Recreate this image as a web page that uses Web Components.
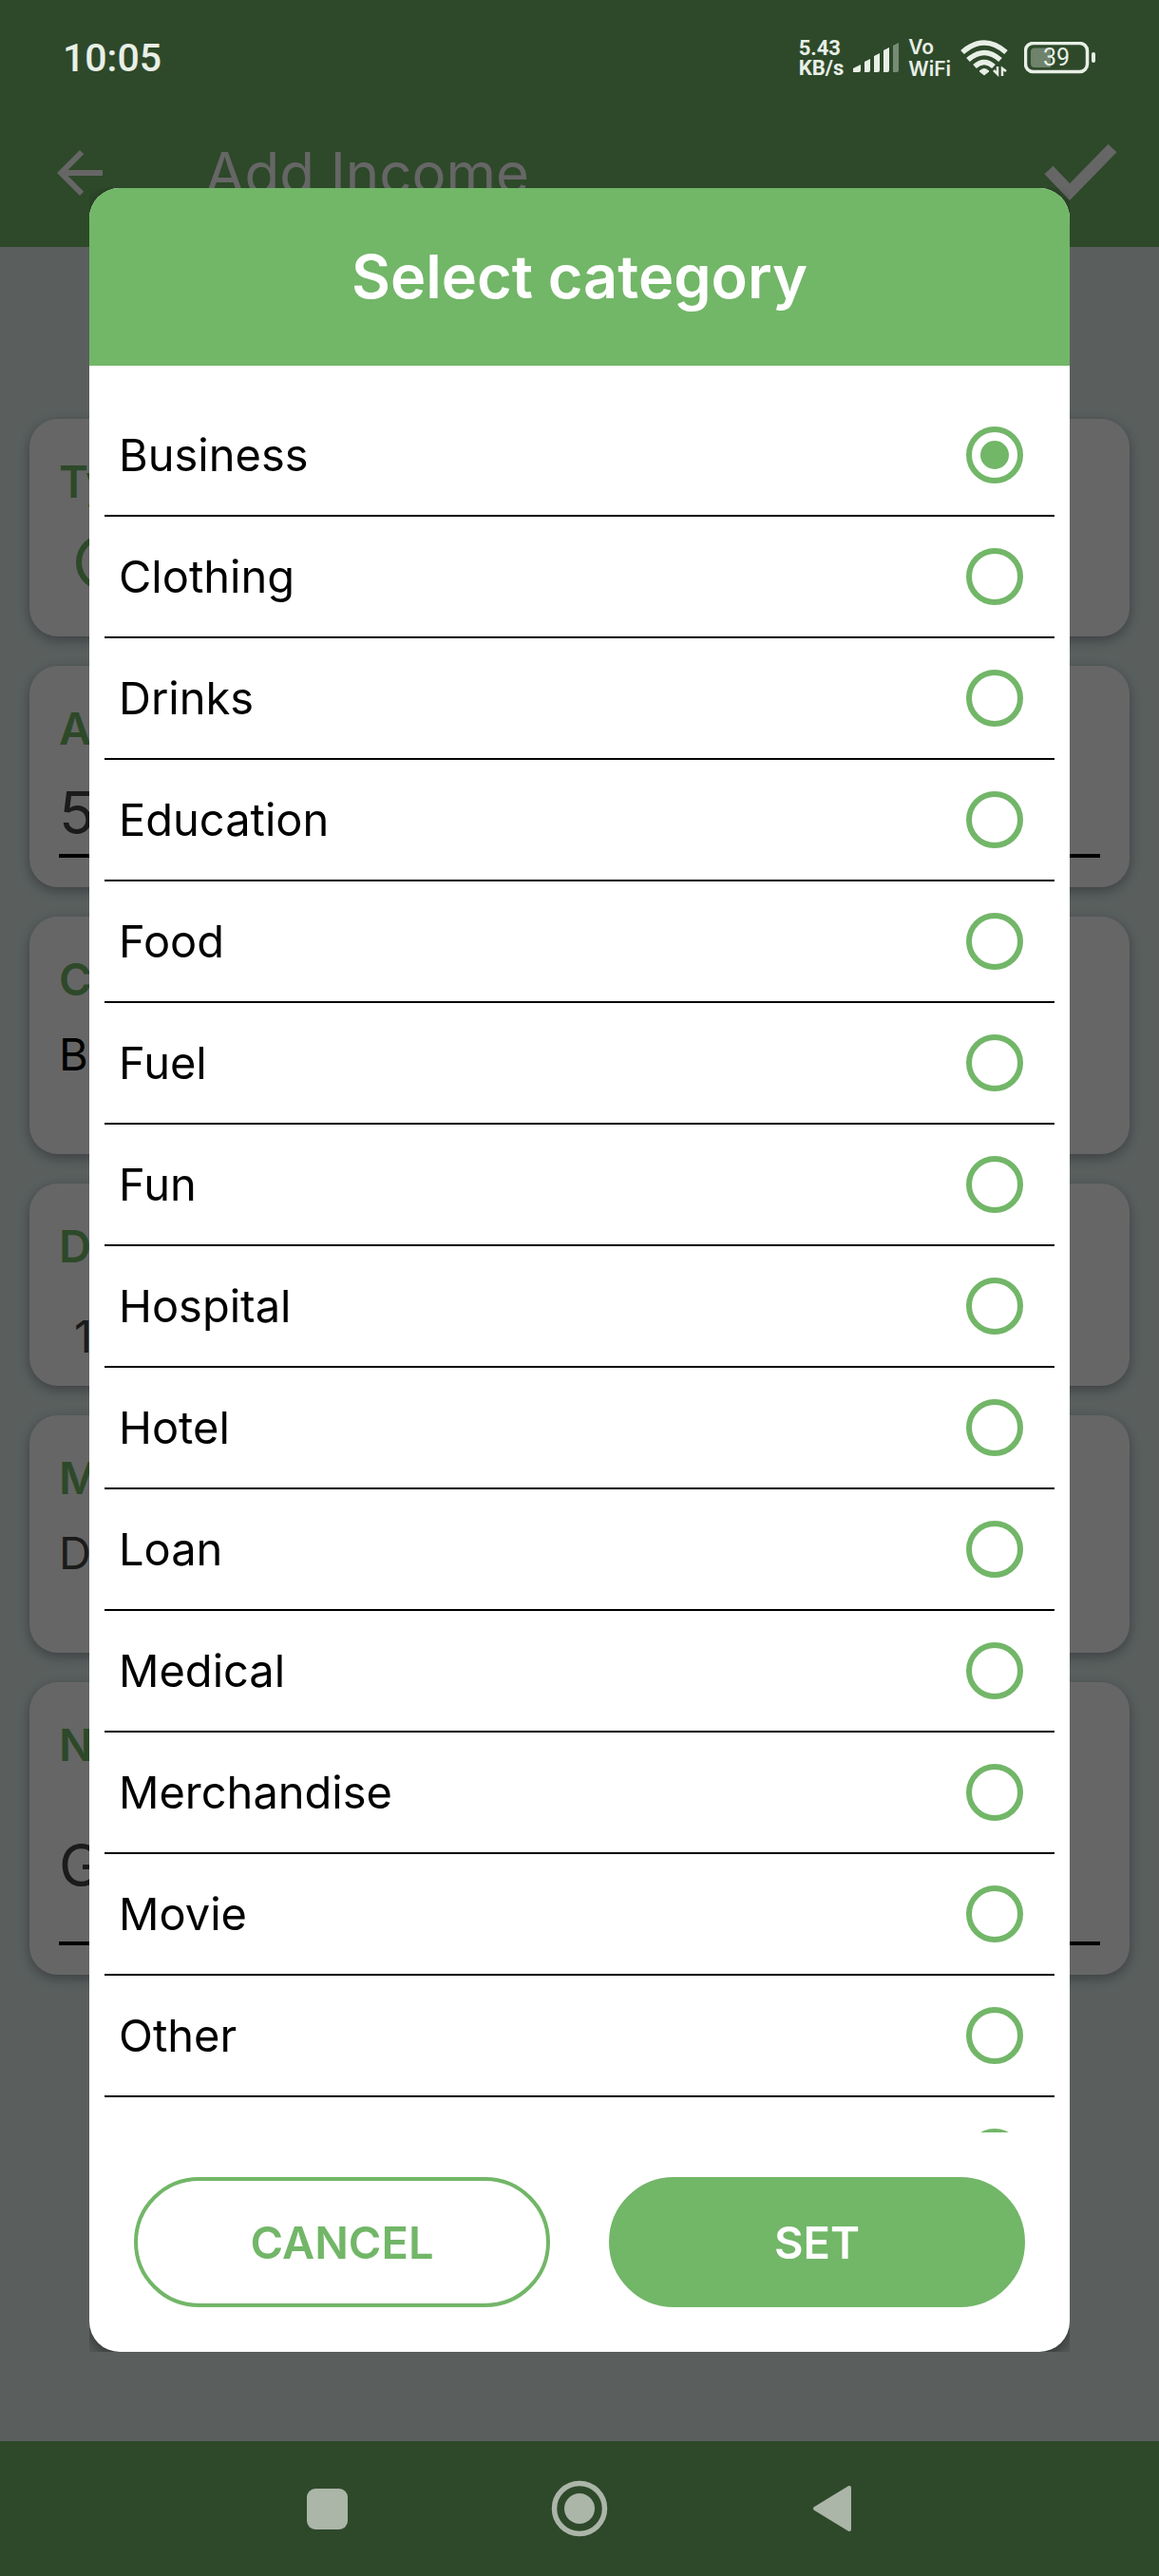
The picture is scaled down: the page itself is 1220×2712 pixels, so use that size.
<!DOCTYPE html>
<html lang="en">
<head>
<meta charset="utf-8">
<meta name="viewport" content="width=device-width, initial-scale=1">
<title>Add Income</title>
<style>
  html, body { margin: 0; height: 100%; }
  body {
    --green: #72b668;
    --label: 47px;
    --title: 63px;
    font-family: Inter, "Liberation Sans", sans-serif;
    font-size: var(--label);
    line-height: 56px;
    color: #000;
    background: #e1eeec;
  }
</style>
</head>
<body>
<app-screen>
  <status-bar slot="status" time="10:05" rate="5.43" battery="39"></status-bar>
  <app-bar slot="bar">Add Income</app-bar>

  <form-card label="Type"><radio-dot name="type" label="Income"></radio-dot></form-card>
  <form-card label="Amount" size="amount"><line-input value="5" label="Amount"></line-input></form-card>
  <form-card label="Category" size="tall"><field-value>Business</field-value></form-card>
  <form-card label="Date" size="date"><field-value class="soft inset">1</field-value></form-card>
  <form-card label="Mode" size="tall"><field-value class="soft">D</field-value></form-card>
  <form-card label="Note" size="note"><line-input value="G" label="Note"></line-input></form-card>

  <nav-bar slot="nav"></nav-bar>
</app-screen>
<category-dialog heading="Select category" selected="Business"
  options="Business,Clothing,Drinks,Education,Food,Fuel,Fun,Hospital,Hotel,Loan,Medical,Merchandise,Movie,Other,Salary"></category-dialog>

<script>
const define = (name, render) => customElements.define(name, class extends HTMLElement {
  connectedCallback() {
    if (this.shadowRoot) return;
    this.attachShadow({ mode: 'open' }).innerHTML = render(this);
  }
});

const radioStyle = `
  input {
    appearance: none; flex: none; box-sizing: border-box; width: 60px; height: 60px; margin: 0;
    border: 6px solid var(--green); border-radius: 50%; display: grid; place-items: center;
  }
  input:checked::before { content: ""; width: 30px; height: 30px; border-radius: 50%; background: var(--green); }
`;

define('app-screen', () => `
  <style>
    :host { display: flex; flex-direction: column; min-height: 100vh; }
    main { flex: 1; display: flex; flex-direction: column; gap: 31px; padding: 181px 31px 31px; }
  </style>
  <slot name="status"></slot>
  <slot name="bar"></slot>
  <main><slot></slot></main>
  <slot name="nav"></slot>`);

define('status-bar', el => `
  <style>
    :host {
      display: flex; align-items: center; justify-content: space-between; box-sizing: border-box;
      height: 104px; padding: 18px 66px 0; position: relative; z-index: 2;
      background: #2e492a; color: #e8efe6; font-family: Roboto, sans-serif;
    }
    time { font-size: 41px; font-weight: 500; }
    .icons { display: flex; align-items: center; gap: 10px; }
    .pair { display: flex; flex-direction: column; font-size: 22px; line-height: 21px; font-weight: 700; }
    .vo { font-family: Inter, sans-serif; font-weight: 600; font-size: 21px; line-height: 23px; }
    svg { display: block; }
    .battery { display: grid; align-items: center; margin-left: 7px; }
    .battery > * { grid-area: 1 / 1; }
    .battery span { width: 68px; text-align: center; font-size: 25px; line-height: 34px; }
  </style>
  <time>${el.getAttribute('time')}</time>
  <div class="icons">
    <div class="pair"><span>${el.getAttribute('rate')}</span><span>KB/s</span></div>
    <svg width="48" height="32" fill="currentColor" aria-hidden="true">
      <path d="M0 31V27L8 23V29Q8 31 6 31Z"/>
      <path d="M12 31V20L18 17V29Q18 31 16 31Z"/>
      <path d="M22 31V14L28 11V29Q28 31 26 31Z"/>
      <path d="M32 31V8L38 5V29Q38 31 36 31Z"/>
      <path d="M42 31V3L48 0V29Q48 31 46 31Z" opacity=".4"/>
    </svg>
    <div class="pair vo"><span>Vo</span><span>WiFi</span></div>
    <svg width="50" height="39" fill="none" stroke="currentColor" stroke-width="5.5" aria-hidden="true">
      <path d="M2 13Q25 -7 48 13"/><path d="M8 21Q25 6 42 21"/><path d="M15 28Q25 19 35 28"/>
      <path d="M20 33Q25 28 30 33L25 37Z" fill="currentColor" stroke-width="1"/>
      <path d="M39 28V36L35 32M44 38V30L48 33" stroke-width="2.5"/>
    </svg>
    <div class="battery">
      <svg width="76" height="34" aria-hidden="true">
        <rect x="1.5" y="1.5" width="65" height="30" rx="8" fill="none" stroke="currentColor" stroke-width="3.5"/>
        <path d="M28 6.500V27H11Q7 27 7 23V10.500Q7 6.500 11 6.500Z" fill="currentColor" opacity=".35"/>
        <rect x="71" y="11" width="4" height="11" rx="2" fill="currentColor"/>
      </svg>
      <span>${el.getAttribute('battery')}</span>
    </div>
  </div>`);

define('app-bar', () => `
  <style>
    :host { display: flex; align-items: center; height: 156px; padding: 0 36px 0 48px; background: var(--green); color: #fff; }
    h1 { flex: 1; margin: 0 0 0 96px; font: 400 60px/72px Inter, sans-serif; }
    button { display: block; padding: 0; border: 0; background: none; color: inherit; }
    svg { display: block; }
  </style>
  <button aria-label="Back"><svg width="72" height="72" viewBox="0 0 24 24" fill="currentColor"><path d="M20 11H7.830l5.590-5.590L12 4l-8 8 8 8 1.410-1.410L7.830 13H20v-2z"/></svg></button>
  <h1><slot></slot></h1>
  <button aria-label="Save"><svg width="92" height="72" viewBox="0 0 92 72" fill="none" stroke="currentColor" stroke-width="12.500"><path d="M12 33L34 56L79 10"/></svg></button>`);

define('form-card', el => `
  <style>
    :host {
      display: flex; flex-direction: column; box-sizing: border-box; min-height: 229px;
      padding: 38px 31px 31px; border-radius: 30px; background: #fff;
      box-shadow: 0 4px 14px rgba(50, 55, 75, .45);
    }
    :host([size=amount]) { min-height: 233px; }
    :host([size=tall]) { min-height: 250px; gap: 23px; }
    :host([size=date]) { min-height: 213px; gap: 39px; padding-bottom: 24px; }
    :host([size=note]) { min-height: 308px; }
    h2 { margin: 0; font: inherit; font-weight: 600; color: var(--green); }
  </style>
  <h2>${el.getAttribute('label')}</h2>
  <slot></slot>`);

define('radio-dot', el => `
  <style>:host { display: flex; padding: 27px 18px 0; } ${radioStyle}</style>
  <input type="radio" name="${el.getAttribute('name')}" aria-label="${el.getAttribute('label')}">`);

define('line-input', el => `
  <style>
    :host { display: flex; flex: 1; min-height: 108px; }
    input {
      flex: 1; min-width: 0; box-sizing: border-box; margin: 0; padding: 18px 0 0;
      border: 0; border-bottom: 4px solid #000; background: none;
      font: 400 62px/72px Inter, sans-serif; color: #444;
    }
  </style>
  <input type="text" value="${el.getAttribute('value')}" aria-label="${el.getAttribute('label')}">`);

define('field-value', () => `
  <style>
    :host { display: block; }
    :host(.soft) { color: #444; }
    :host(.inset) { padding-left: 16px; }
  </style><slot></slot>`);

define('nav-bar', () => `
  <style>
    :host { display: flex; align-items: center; justify-content: center; gap: 194px; height: 142px; position: relative; z-index: 2; background: #2e492a; color: #abb5a8; }
    button { display: block; padding: 0; border: 0; background: none; color: inherit; }
    svg { display: block; }
  </style>
  <button aria-label="Recents"><svg width="72" height="72"><rect x="15" y="15" width="43" height="43" rx="9" fill="currentColor"/></svg></button>
  <button aria-label="Home"><svg width="72" height="72"><circle cx="36" cy="36" r="26.500" fill="none" stroke="currentColor" stroke-width="5.500"/><circle cx="36" cy="36" r="16" fill="currentColor"/></svg></button>
  <button aria-label="Back"><svg width="72" height="72"><path d="M18 36L54 14V58Z" fill="currentColor" stroke="currentColor" stroke-width="4" stroke-linejoin="round"/></svg></button>`);

define('category-option', el => `
  <style>
    :host { display: block; border-bottom: 2px solid #000; }
    label { display: flex; align-items: center; justify-content: space-between; height: 126px; padding: 0 33px 0 15px; }
    ${radioStyle}
  </style>
  <label>${el.getAttribute('name')}<input type="radio" name="category" ${el.hasAttribute('checked') ? 'checked' : ''}></label>`);

define('pill-button', () => `
  <style>
    :host { display: flex; flex: 1; }
    button {
      flex: 1; height: 137px; padding: 0; border: 4px solid var(--green); border-radius: 69px;
      background: none; color: var(--green); font: inherit; font-weight: 600;
    }
    :host([filled]) button { background: var(--green); color: #fff; }
  </style><button><slot></slot></button>`);

define('category-dialog', el => `
  <style>
    :host {
      display: flex; flex-direction: column; position: fixed; inset: 0; z-index: 1; box-sizing: border-box;
      padding: 198px 94px 236px; background: rgba(0, 0, 0, .6);
    }
    .frame { display: flex; flex-direction: column; min-height: 0; overflow: hidden; }
    section {
      display: flex; flex-direction: column; min-height: 0; border-radius: 32px;
      background: #fff; box-shadow: 0 6px 18px rgba(0, 0, 0, .5);
    }
    h2 {
      flex: none; margin: 0; padding: 57px 0 58px; border-radius: 32px 32px 0 0; text-align: center;
      background: var(--green); color: #fff; font-size: var(--title); line-height: 72px; font-weight: 600;
    }
    .list { flex: 0 1 auto; min-height: 0; overflow-y: auto; scrollbar-width: none; padding: 31px 16px 0; }
    footer { flex: none; display: flex; gap: 62px; padding: 47px; }
  </style>
  <div class="frame"><section role="dialog" aria-modal="true" aria-label="${el.getAttribute('heading')}">
    <h2>${el.getAttribute('heading')}</h2>
    <div class="list">${el.getAttribute('options').split(',').map(o =>
      `<category-option name="${o}" ${o === el.getAttribute('selected') ? 'checked' : ''}></category-option>`).join('')}</div>
    <footer><pill-button>CANCEL</pill-button><pill-button filled>SET</pill-button></footer>
  </section></div>`);
</script>
</body>
</html>
